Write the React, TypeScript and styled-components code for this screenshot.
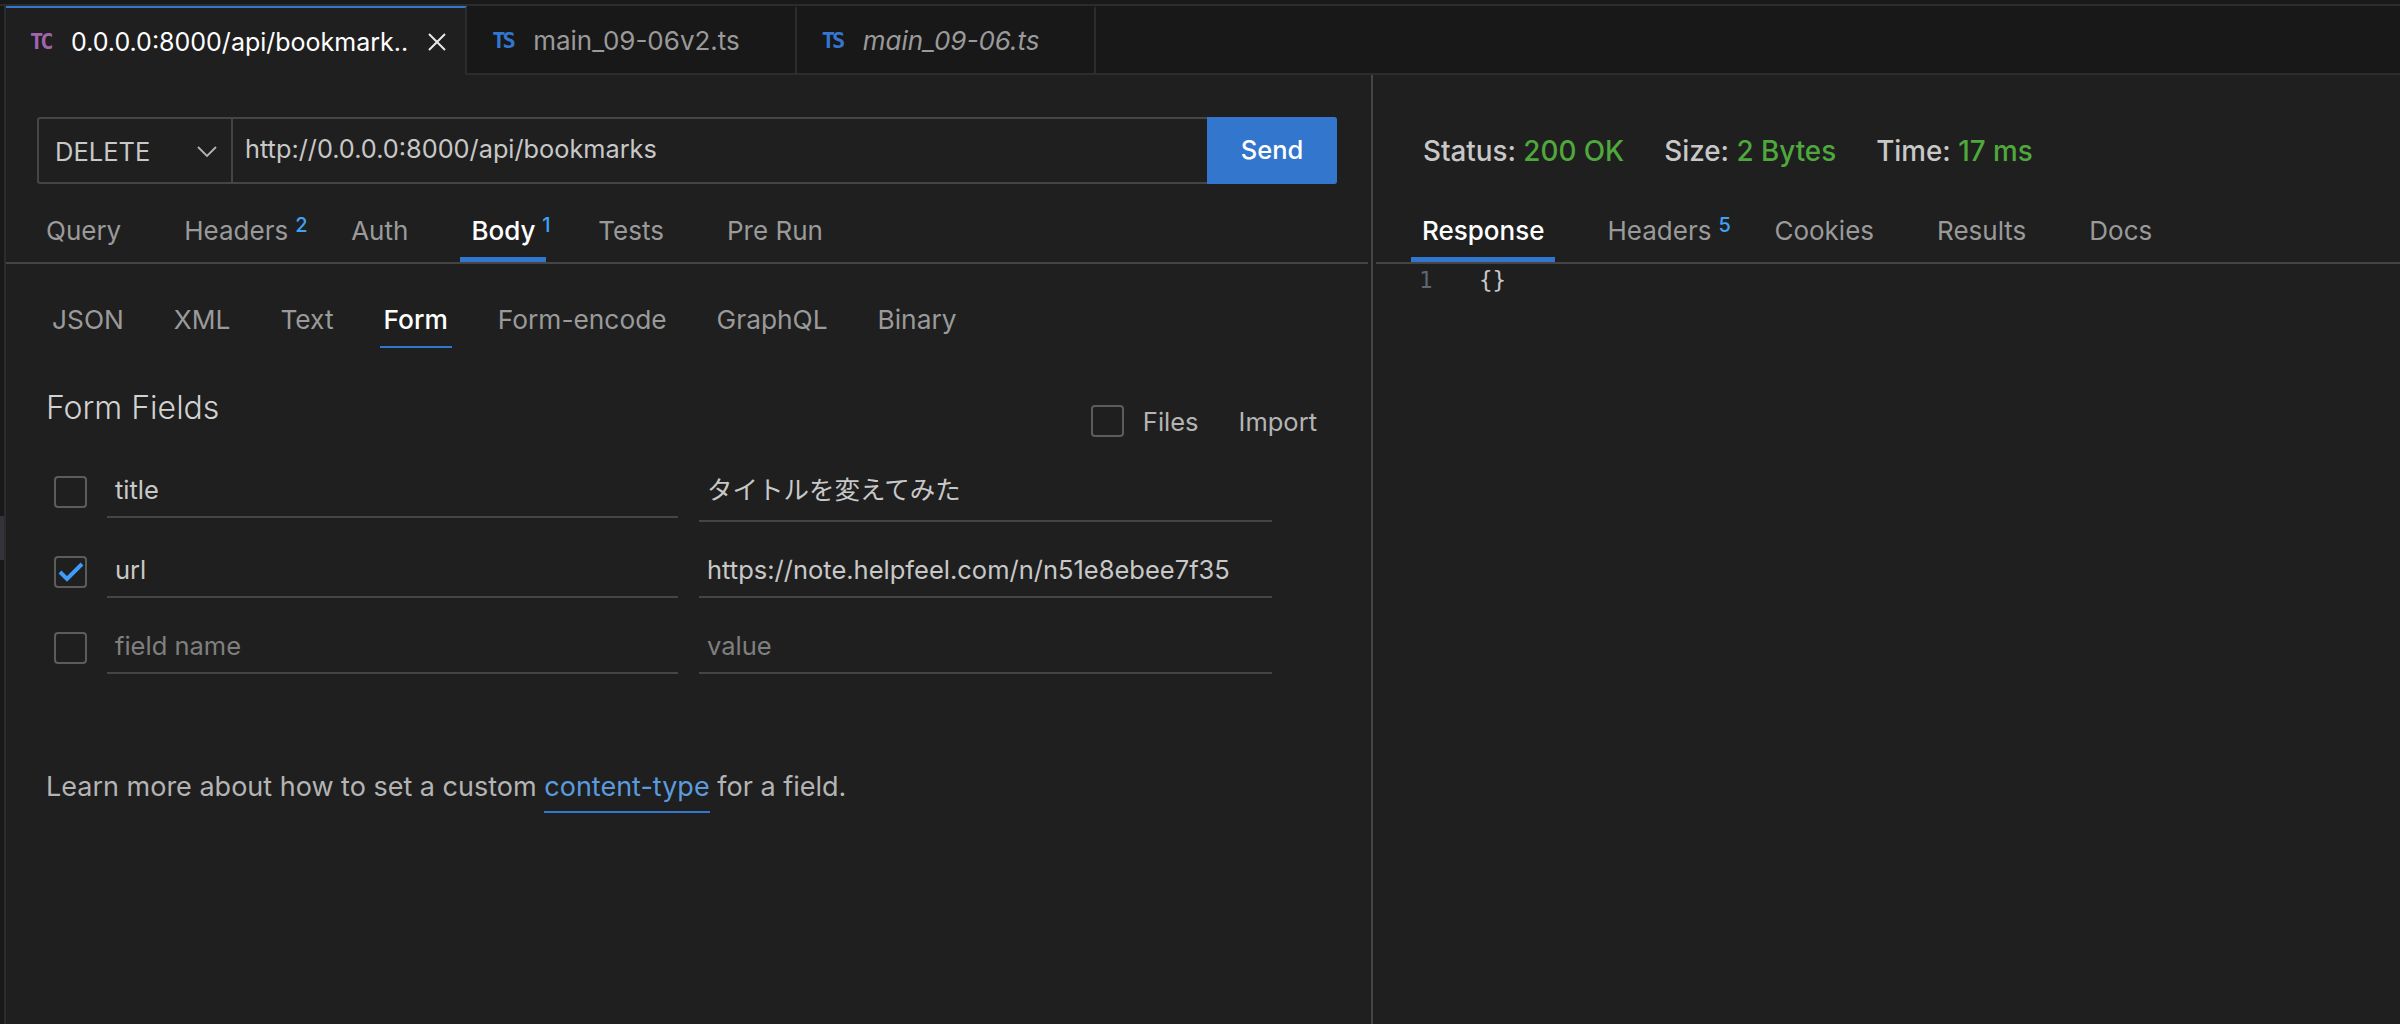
import React from "react";
import styled, { createGlobalStyle } from "styled-components";

const Global = createGlobalStyle`
  html, body { margin: 0; padding: 0; background: #1f1f1f; }
  * { box-sizing: border-box; }
  body { font-family: Inter, "Noto Sans CJK JP", sans-serif; }
`;

const Shell = styled.div`
  width: 2400px;
  height: 1024px;
  display: flex;
  flex-direction: column;
  overflow: hidden;
  background: #1f1f1f;
  color: #c8c8c8;
  font-size: 25px;
`;
const TopEdge = styled.div`
  height: 6px;
  flex: none;
  background: #191919;
  border-bottom: 2px solid #2c2c2c;
`;
const Body = styled.div`
  flex: 1;
  display: flex;
  min-height: 0;
`;
const Rail = styled.div`
  width: 6px;
  flex: none;
  background: #191919;
  border-right: 2px solid #2c2c2c;
  padding-top: 510px;
`;
const RailGrip = styled.div`
  width: 4px;
  height: 44px;
  background: #33333a;
`;
const Main = styled.div`
  flex: 1;
  min-width: 0;
  display: flex;
  flex-direction: column;
`;
const TabStrip = styled.div`
  height: 69px;
  flex: none;
  display: flex;
  background: #181818;
  border-bottom: 2px solid #2c2c2c;
`;
const FileTab = styled.div<{ $active?: boolean }>`
  height: ${(p) => (p.$active ? "69px" : "67px")};
  display: flex;
  align-items: center;
  padding: ${(p) => (p.$active ? "0 18px 0 24px" : "0 55px 0 25px")};
  background: ${(p) => (p.$active ? "#1f1f1f" : "#181818")};
  border-top: 2px solid ${(p) => (p.$active ? "#3376cd" : "#181818")};
  border-right: 2px solid #2c2c2c;
  flex: none;
`;
const FileBadge = styled.span<{ $color: string }>`
  width: 41px;
  flex: none;
  font: 700 22px "DejaVu Sans Mono", monospace;
  letter-spacing: -3px;
  color: ${(p) => p.$color};
`;
const FileName = styled.span<{ $active?: boolean; $preview?: boolean }>`
  font-size: ${(p) => (p.$active ? "25px" : "26px")};
  color: ${(p) => (p.$active ? "#ffffff" : "#9a9a9a")};
  font-style: ${(p) => (p.$preview ? "italic" : "normal")};
`;
const CloseIcon = styled.svg`
  width: 20px;
  height: 20px;
  margin-left: 19px;
  flex: none;
`;
const Panes = styled.div`
  flex: 1;
  display: flex;
  min-height: 0;
`;
const LeftPane = styled.div`
  width: 1362px;
  flex: none;
`;
const Divider = styled.div`
  width: 2px;
  margin-left: 3px;
  margin-right: 3px;
  flex: none;
  background: #454545;
`;
const RightPane = styled.div`
  flex: 1;
  min-width: 0;
`;
const UrlRow = styled.div`
  padding: 42px 31px 0 31px;
`;
const UrlBar = styled.div`
  height: 67px;
  display: flex;
  border: 2px solid #454545;
  border-right: none;
  border-radius: 3px;
`;
const Method = styled.div`
  width: 194px;
  flex: none;
  display: flex;
  align-items: center;
  justify-content: space-between;
  padding: 2px 14px 0 16px;
  border-right: 2px solid #454545;
  color: #c8c8c8;
  font-size: 25.5px;
`;
const UrlText = styled.div`
  flex: 1;
  display: flex;
  align-items: center;
  padding: 0 0 4px 12px;
  color: #c8c8c8;
  font-size: 25.3px;
`;
const SendButton = styled.button`
  width: 130px;
  height: 67px;
  margin: -2px 0;
  border: none;
  border-radius: 0 3px 3px 0;
  background: #3376cd;
  color: #ffffff;
  font: 500 25.5px Inter, sans-serif;
  padding: 0 0 3px;
`;
const MainTabs = styled.div<{ $left: number }>`
  height: 80px;
  display: flex;
  align-items: flex-end;
  gap: 41px;
  padding-left: ${(p) => p.$left}px;
  border-bottom: 2px solid #454545;
`;
const MainTab = styled.div<{ $active?: boolean }>`
  position: relative;
  height: 48px;
  padding: 0 11px;
  font-size: 26px;
  color: ${(p) => (p.$active ? "#ffffff" : "#9a9a9a")};
  font-weight: ${(p) => (p.$active ? 500 : 400)};
  border-bottom: 5px solid ${(p) => (p.$active ? "#3376cd" : "transparent")};
  line-height: 33px;
`;
const Sup = styled.span`
  position: absolute;
  left: calc(100% - 4px);
  top: 0;
  font-size: 20px;
  line-height: 22px;
  font-weight: 500;
  color: #3fa2f5;
`;
const SubTabs = styled.div`
  display: flex;
  gap: 42px;
  padding: 39px 0 0 42px;
`;
const SubTab = styled.div<{ $active?: boolean }>`
  height: 45px;
  padding: 0 4px;
  line-height: 33px;
  font-size: 26.3px;
  color: ${(p) => (p.$active ? "#ffffff" : "#9a9a9a")};
  font-weight: ${(p) => (p.$active ? 500 : 400)};
  border-bottom: 2px solid ${(p) => (p.$active ? "#3376cd" : "transparent")};
`;
const FormHead = styled.div`
  display: flex;
  align-items: flex-start;
  justify-content: space-between;
  padding: 40px 51px 0 40px;
  height: 128px;
`;
const FormTitle = styled.div`
  font-size: 32px;
  line-height: 40px;
  font-weight: 300;
  color: #d2d2d2;
`;
const FormActions = styled.div`
  display: flex;
  align-items: center;
  padding-top: 17px;
  color: #b4b4b4;
  font-size: 25.5px;
`;
const Check = styled.span`
  width: 33px;
  height: 32px;
  flex: none;
  display: flex;
  align-items: center;
  justify-content: center;
  border: 2px solid #5c5c5c;
  border-radius: 4px;
`;
const ActionLabel = styled.span<{ $gap: number }>`
  margin-left: ${(p) => p.$gap}px;
`;
const Rows = styled.div`
  display: flex;
  flex-direction: column;
`;
const Row = styled.div<{ $height: number }>`
  height: ${(p) => p.$height}px;
  display: flex;
  align-items: flex-start;
  padding-left: 48px;
`;
const RowCheck = styled.div`
  width: 53px;
  flex: none;
`;
const Field = styled.div<{ $width: number; $height: number; $ghost?: boolean }>`
  width: ${(p) => p.$width}px;
  height: ${(p) => p.$height}px;
  flex: none;
  padding-left: 8px;
  margin-right: 21px;
  border-bottom: 2px solid #454545;
  font-size: 25.5px;
  color: ${(p) => (p.$ghost ? "#7f7f7f" : "#c8c8c8")};
  line-height: 28px;
`;
const Note = styled.div`
  padding: 95px 0 0 40px;
  line-height: 36px;
  font-size: 27px;
  color: #b4b4b4;
`;
const NoteLink = styled.span`
  display: inline-block;
  height: 44px;
  color: #5b9ade;
  border-bottom: 2px solid #3376cd;
`;
const StatusRow = styled.div`
  display: flex;
  padding: 61px 0 0 47px;
  height: 109px;
  line-height: 30px;
  font-size: 27.8px;
  font-weight: 500;
  color: #c8c8c8;
`;
const StatusItem = styled.span`
  margin-right: 40px;
`;
const Good = styled.span`
  color: #4fa83d;
`;
const CodeLine = styled.div`
  display: flex;
  padding: 1px 0 0 43px;
  font: 22.5px/30px "DejaVu Sans Mono", monospace;
`;
const LineNo = styled.span`
  width: 60px;
  color: #5f6670;
`;
const CodeText = styled.span`
  color: #c8c8c8;
`;

export default function App() {
  return (
    <>
      <Global />
      <Shell>
        <TopEdge />
        <Body>
          <Rail>
            <RailGrip />
          </Rail>
          <Main>
            <TabStrip>
              <FileTab $active>
                <FileBadge $color="#a066ad">TC</FileBadge>
                <FileName $active>0.0.0.0:8000/api/bookmark..</FileName>
                <CloseIcon viewBox="0 0 20 20" fill="none" stroke="#e8e8e8" strokeWidth="2">
                  <path d="M2 2l16 16M18 2L2 18" />
                </CloseIcon>
              </FileTab>
              <FileTab>
                <FileBadge $color="#3376cd">TS</FileBadge>
                <FileName>main_09-06v2.ts</FileName>
              </FileTab>
              <FileTab>
                <FileBadge $color="#3376cd">TS</FileBadge>
                <FileName $preview>main_09-06.ts</FileName>
              </FileTab>
            </TabStrip>
            <Panes>
              <LeftPane>
                <UrlRow>
                  <UrlBar>
                    <Method>
                      DELETE
                      <svg width="20" height="12" viewBox="0 0 20 12" fill="none" stroke="#b4b4b4" strokeWidth="1.8">
                        <path d="M1 1l9 9 9-9" />
                      </svg>
                    </Method>
                    <UrlText>http://0.0.0.0:8000/api/bookmarks</UrlText>
                    <SendButton>Send</SendButton>
                  </UrlBar>
                </UrlRow>
                <MainTabs $left={29}>
                  <MainTab>Query</MainTab>
                  <MainTab>Headers<Sup>2</Sup></MainTab>
                  <MainTab>Auth</MainTab>
                  <MainTab $active>Body<Sup>1</Sup></MainTab>
                  <MainTab>Tests</MainTab>
                  <MainTab>Pre Run</MainTab>
                </MainTabs>
                <SubTabs>
                  <SubTab>JSON</SubTab>
                  <SubTab>XML</SubTab>
                  <SubTab>Text</SubTab>
                  <SubTab $active>Form</SubTab>
                  <SubTab>Form-encode</SubTab>
                  <SubTab>GraphQL</SubTab>
                  <SubTab>Binary</SubTab>
                </SubTabs>
                <FormHead>
                  <FormTitle>Form Fields</FormTitle>
                  <FormActions>
                    <Check />
                    <ActionLabel $gap={19}>Files</ActionLabel>
                    <ActionLabel $gap={40}>Import</ActionLabel>
                  </FormActions>
                </FormHead>
                <Rows>
                  <Row $height={80}>
                    <RowCheck><Check /></RowCheck>
                    <Field $width={571} $height={42}>title</Field>
                    <Field $width={573} $height={46}>タイトルを変えてみた</Field>
                  </Row>
                  <Row $height={76}>
                    <RowCheck>
                      <Check>
                        <svg width="26" height="22" viewBox="0 0 26 22" fill="none" stroke="#3f9bfa" strokeWidth="4">
                          <path d="M2 11l7 7L24 3" />
                        </svg>
                      </Check>
                    </RowCheck>
                    <Field $width={571} $height={42}>url</Field>
                    <Field $width={573} $height={42}>https://note.helpfeel.com/n/n51e8ebee7f35</Field>
                  </Row>
                  <Row $height={42}>
                    <RowCheck><Check /></RowCheck>
                    <Field $width={571} $height={42} $ghost>field name</Field>
                    <Field $width={573} $height={42} $ghost>value</Field>
                  </Row>
                </Rows>
                <Note>
                  Learn more about how to set a custom <NoteLink>content-type</NoteLink> for a field.
                </Note>
              </LeftPane>
              <Divider />
              <RightPane>
                <StatusRow>
                  <StatusItem>Status: <Good>200 OK</Good></StatusItem>
                  <StatusItem>Size: <Good>2 Bytes</Good></StatusItem>
                  <StatusItem>Time: <Good>17 ms</Good></StatusItem>
                </StatusRow>
                <MainTabs $left={35}>
                  <MainTab $active>Response</MainTab>
                  <MainTab>Headers<Sup>5</Sup></MainTab>
                  <MainTab>Cookies</MainTab>
                  <MainTab>Results</MainTab>
                  <MainTab>Docs</MainTab>
                </MainTabs>
                <CodeLine>
                  <LineNo>1</LineNo>
                  <CodeText>{"{}"}</CodeText>
                </CodeLine>
              </RightPane>
            </Panes>
          </Main>
        </Body>
      </Shell>
    </>
  );
}
